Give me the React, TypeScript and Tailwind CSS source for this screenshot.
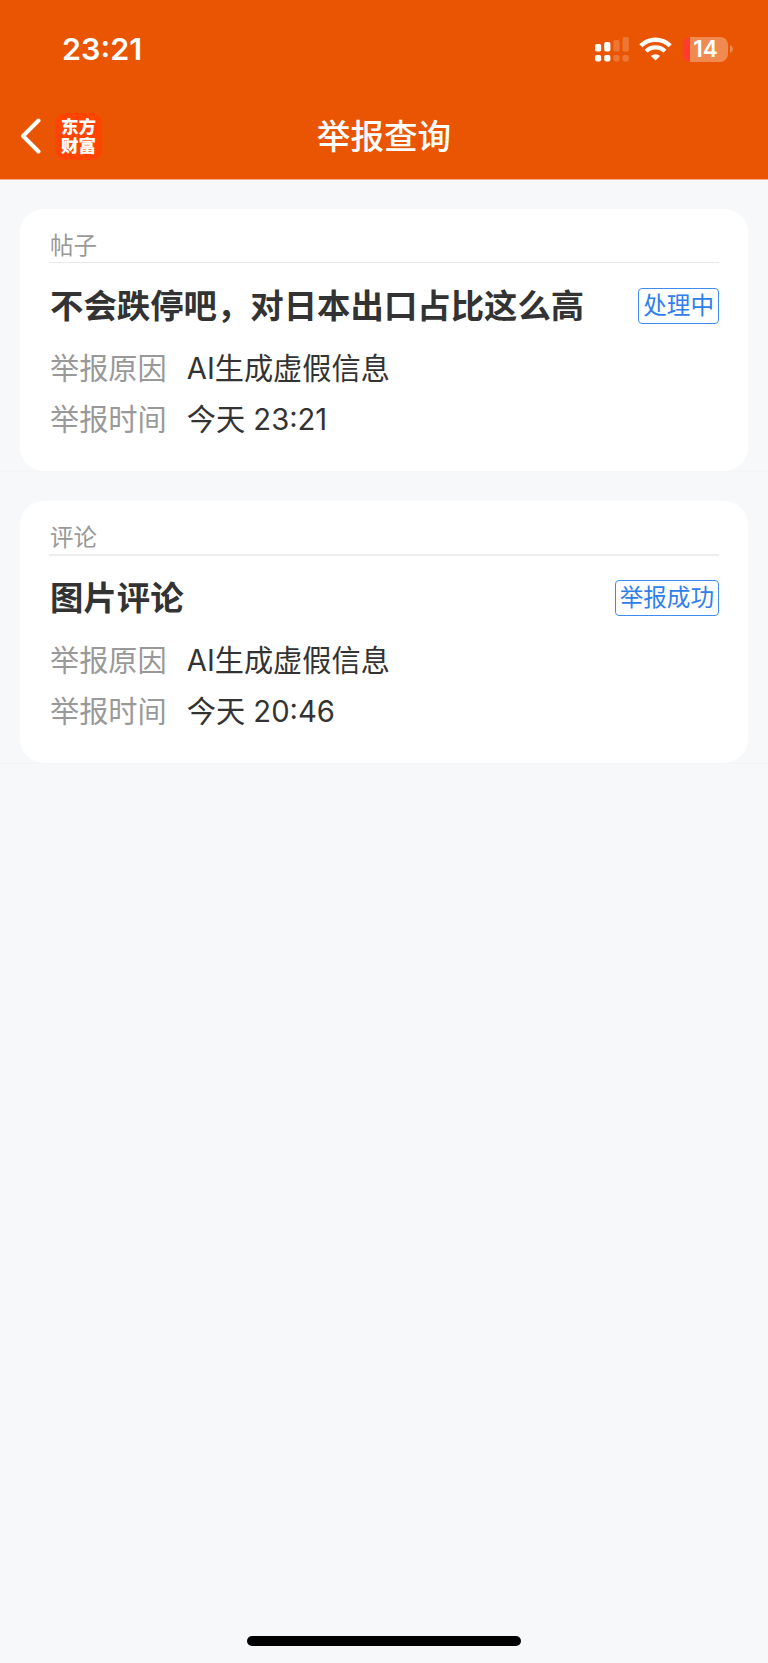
import React from "react";

type Report = {
  kind: string;
  title: string;
  status: string;
  reason: string;
  time: string;
  ruleClass: string;
};

const reports: Report[] = [
  {
    kind: "帖子",
    title: "不会跌停吧，对日本出口占比这么高",
    status: "处理中",
    reason: "AI生成虚假信息",
    time: "今天 23:21",
    ruleClass: "h-px bg-[#e9e9ea]",
  },
  {
    kind: "评论",
    title: "图片评论",
    status: "举报成功",
    reason: "AI生成虚假信息",
    time: "今天 20:46",
    ruleClass: "-mb-px h-0.5 bg-[#eeeeef]",
  },
];

function SignalIcon() {
  return (
    <svg width="34" height="25" viewBox="0 0 34 25" fill="#fff">
      <rect x="0" y="7" width="6.2" height="7.6" rx="1.8" />
      <rect x="9.2" y="5" width="6.2" height="9.6" rx="1.8" />
      <rect x="0" y="18" width="6.2" height="6.4" rx="1.8" />
      <rect x="9.2" y="18" width="6.2" height="6.4" rx="1.8" />
      <g opacity="0.2">
        <rect x="18.4" y="3" width="6.2" height="11.6" rx="1.8" />
        <rect x="27.6" y="0" width="6.2" height="14.6" rx="1.8" />
        <rect x="18.4" y="18" width="6.2" height="6.4" rx="1.8" />
        <rect x="27.6" y="18" width="6.2" height="6.4" rx="1.8" />
      </g>
    </svg>
  );
}

function WifiIcon() {
  return (
    <svg width="33" height="24" viewBox="0 0 33 24" fill="none" stroke="#fff" strokeWidth="4.4">
      <path d="M1.8 8.8 A21 21 0 0 1 31.2 8.8" />
      <path d="M7.1 14.2 A13.4 13.4 0 0 1 25.9 14.2" />
      <path d="M16.5 23.6 L11.9 19 A6.6 6.6 0 0 1 21.1 19 Z" fill="#fff" stroke="none" />
    </svg>
  );
}

function Battery() {
  return (
    <div className="flex items-center gap-[2px]">
      <div className="flex h-[25px] w-[45px] items-center justify-center overflow-hidden rounded-[8px] bg-[linear-gradient(90deg,#ff3b30_0_7px,#f18a51_7px)] pt-px text-[22.5px] leading-none font-semibold text-white">
        14
      </div>
      <svg width="3" height="8" viewBox="0 0 3 8">
        <path d="M0 0 Q3 1.3 3 4 T0 8 Z" fill="#f18a51" />
      </svg>
    </div>
  );
}

function Row({ label, value }: { label: string; value: string }) {
  return (
    <div className="flex h-[51px] items-center gap-[20px] text-[29.2px] leading-[51px]">
      <span className="text-[#999999]">{label}</span>
      <span className="text-[#333333]">{value}</span>
    </div>
  );
}

function Card({ report }: { report: Report }) {
  return (
    <article className="h-[262px] rounded-[24px] bg-white px-[29px]">
      <div className="flex h-[53px] items-end pl-px text-[23.5px] leading-[32px] text-[#999999]">
        {report.kind}
      </div>
      <div className={report.ruleClass} />
      <div className="flex h-[86px] items-center justify-between pl-px">
        <h2 className="text-[33.4px] leading-[44px] font-semibold whitespace-nowrap text-[#333333]">
          {report.title}
        </h2>
        <span className="flex h-[36px] items-center rounded-[4px] border border-[#3d8cf0] px-1 text-[23.6px] leading-[34px] whitespace-nowrap text-[#2f80ed]">
          {report.status}
        </span>
      </div>
      <div className="-mt-[6px] pl-px">
        <Row label="举报原因" value={report.reason} />
        <Row label="举报时间" value={report.time} />
      </div>
    </article>
  );
}

export default function App() {
  return (
    <div className="flex h-[1663px] w-[768px] flex-col bg-[#f7f8fa] font-['Inter','Noto_Sans_CJK_SC',sans-serif]">
      <header className="h-[180px] border-b border-[#f3b28d] bg-[#ea5504]">
        <div className="flex h-[98px] items-center justify-between pr-[35px] pl-[62px]">
          <span className="text-[30.5px] leading-none font-semibold text-white">23:21</span>
          <div className="flex items-center">
            <SignalIcon />
            <span className="ml-[10px] flex">
              <WifiIcon />
            </span>
            <span className="ml-[11px] flex">
              <Battery />
            </span>
          </div>
        </div>
        <div className="grid h-[76px] grid-cols-[1fr_auto_1fr] items-center">
          <div className="flex items-center gap-[14px] pl-[20px]">
            <svg width="21" height="36" viewBox="0 0 21 36" fill="none" stroke="#fff" strokeWidth="4" strokeLinecap="round" strokeLinejoin="round">
              <path d="M18.5 2.5 L3 18 L18.5 33.5" />
            </svg>
            <div className="flex h-[47px] w-[47px] flex-col items-center justify-center rounded-[10px] bg-[#ff4400] text-[17.5px] leading-[19px] font-black text-white">
              <span>东方</span>
              <span>财富</span>
            </div>
          </div>
          <h1 className="pt-[2px] text-[33.6px] leading-[44px] font-medium text-white">举报查询</h1>
          <div />
        </div>
      </header>
      <main className="flex flex-1 flex-col px-[20px] pt-[29px]">
        <Card report={reports[0]} />
        <div className="-mx-[20px] mb-[29px] h-px bg-[#f4f5f6]" />
        <Card report={reports[1]} />
        <div className="-mx-[20px] h-px bg-[#f3f4f5]" />
      </main>
      <footer className="flex h-[27px] justify-center">
        <div className="h-[10px] w-[274px] rounded-full bg-black" />
      </footer>
    </div>
  );
}
